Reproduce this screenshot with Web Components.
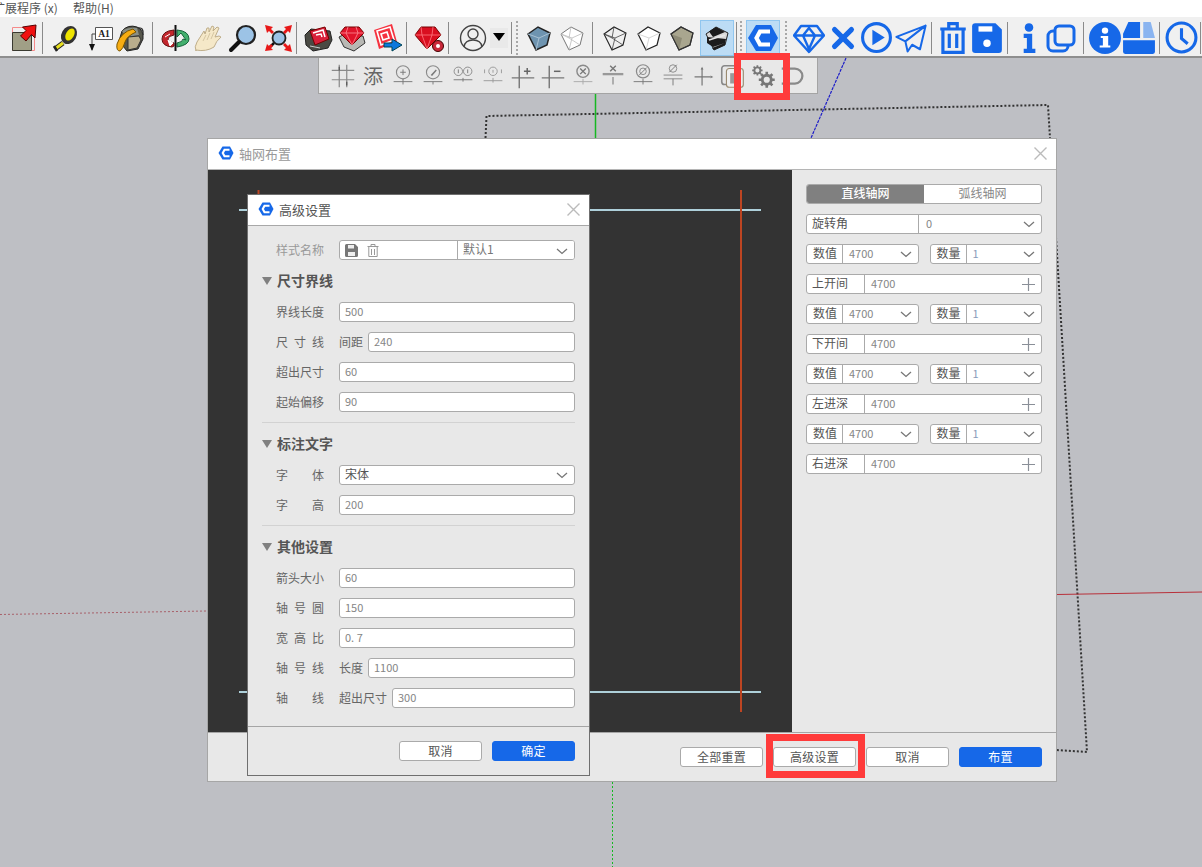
<!DOCTYPE html>
<html lang="zh"><head><meta charset="utf-8"><title>轴网布置</title>
<style>html,body{margin:0;padding:0;background:#bebfc4}</style></head>
<body><su-app></su-app>
<script>
const B='#1668e8';
const LOGO=`<path d="M1 16 9 3h15l7 13-7 13H9z" fill="${B}"/><path d="M23 9.500H13L9.500 16l3.500 6.500h10" fill="none" stroke="#fff" stroke-width="4.200"/>`;
const cubeOuter='M5 12 15 5 27 11 24 23 13 28z';
const cubeIn='M5 12 16 16 27 11M16 16 13 28';
const cubeHid='M15 5 13 16 5 12M13 16 24 23';
const ICONS={
select:`<path d="M5.500 5.500h22v23h-22z" fill="none" stroke="#f58a8a"/><path d="M5.500 10.500h19v18h-19z" fill="#a09f86" stroke="#3a3a30"/><path d="M29 3 28 16 24.500 12.500 19 19 13.500 14 19 8.500 15.500 5z" fill="#f01010" stroke="#500"/>`,
tape:`<path d="M14 21 6 27" stroke="#222" stroke-width="5"/><path d="M14 21 6 27" stroke="#e8e020" stroke-width="3"/><path d="M5 24l3 5" stroke="#222" stroke-width="2.500"/><ellipse cx="20" cy="13" rx="7.500" ry="9.500" transform="rotate(30 20 13)" fill="#333"/><ellipse cx="21" cy="12.500" rx="4" ry="6.500" transform="rotate(30 21 12.500)" fill="#efe400"/>`,
label:`<path d="M11.500 5.500h17v12h-17z" fill="#fff" stroke="#555"/><text x="20" y="15" font-family="Liberation Serif" font-weight="700" font-size="9.500" text-anchor="middle" fill="#222">A1</text><path d="M8 12v16M8 12h3.500" stroke="#444"/><path d="M5 22h6l-3 7z" fill="#111"/>`,
paint:`<path d="M8 9Q14 2 23 5q7 3 6 12l-5 10-11 2L5 19z" fill="#57574c" stroke="#222"/><path d="M8 9Q14 5 23 6l2 7-13 2z" fill="#8a8f86"/><path d="M14 15l11-1 2 4-4 8-9 2z" fill="#b9ad8c" stroke="#333"/><path d="M19 7q-12 3-16 15-1 7 3 7 3-2 5-9 2-6 11-10z" fill="#f8ad12" stroke="#7a5500"/><path d="M24 6q6-1 5 7" fill="none" stroke="#333" stroke-width="1.400"/>`,
orbit:`<path d="M15 8Q3 9 3 17q0 7 10 8l2-1v-3q-6-1-6-4 0-3 6-4z" fill="#c2272d" stroke="#611"/><path d="M9 18l5 3-3 3zM6 15l5-3" fill="#fff" stroke="#fff"/><path d="M18 8q12 1 12 9 0 6-12 8v-4q6-1 6-4l3 1-5-7-4 4z" fill="#43b06e" stroke="#15633a"/><path d="M16.500 3v26" stroke="#111" stroke-width="2"/>`,
hand:`<path d="M4 29Q2 25 5 20L12 9l1 3 2-6 2 0v4l3-6 2 1-1 4 4-4 2 1-4 9 4-1 2 1q-5 4-7 10-8 5-18 3z" fill="#f5e8c8" stroke="#bfae8a"/><path d="M14 13l-3 6M18 11l-3 7M22 10l-3 7" fill="none" stroke="#cdbd98" stroke-width=".8"/>`,
zoom:`<circle cx="19" cy="13" r="9" fill="#9cc3e6" stroke="#222" stroke-width="2.200"/><path d="M12 20 4 28" stroke="#111" stroke-width="4" stroke-linecap="round"/>`,
extents:`<circle cx="17" cy="16" r="6.500" fill="#9cc3e6" stroke="#222" stroke-width="1.800"/><path d="M12 21 7 26" stroke="#111" stroke-width="2.500"/><path d="M3 3l8 2-2 2 3 3-2 2-3-3-2 2zM30 3l-2 8-2-2-3 3-2-2 3-3-2-2zM30 30l-8-2 2-2-3-3 2-2 3 3 2-2z" fill="#e81818"/><path d="M3 29l2-7 2 2 2-2 2 2-2 2 2 2z" fill="#e81818"/>`,
rb1:`<path d="M3 13 9 7l19 2 2 9-4 8-15 3-7-6z" fill="#4a4a44" stroke="#222"/><path d="M8 9 23 5l4 12-14 6z" fill="#d8203a" stroke="#700"/><path d="M11 11l10-3 2 7M14 13l5-1 1 3" fill="none" stroke="#fff" stroke-width="1.500"/><path d="M8 24l10 2" stroke="#ccc"/>`,
rb2:`<path d="M3 15l5 10 10 4 11-8-2-7-20-1z" fill="#b8b8b4" stroke="#333"/><path d="M16 23 4 11l5-6h14l5 6z" fill="#e0142a" stroke="#700"/><path d="M4 11h24M12 5l-2 6 6 12 6-12-2-6" fill="none" stroke="#ff8a94" stroke-width=".8"/>`,
rb3:`<path d="M3 8 21 2l5 18-18 7z" fill="#f5323f"/><path d="M6 9 19 5l4 13-13 5zM10 12l6-2 2 6-6 2z" fill="none" stroke="#fff" stroke-width="1.600"/><path d="M13 21h8v-4l10 6-10 6v-4h-8z" fill="#0d78dc" stroke="#045"/>`,
ruby:`<path d="M14 27 2 13 8 5h14l6 8z" fill="#d90f20" stroke="#700"/><path d="M2 13h26M8 5l1 8 5 14 5-14 1-8" fill="none" stroke="#ff7a82" stroke-width=".8"/><circle cx="25" cy="24" r="5.500" fill="#c9283a" stroke="#400"/><circle cx="25" cy="24" r="2" fill="#fff"/>`,
user:`<circle cx="16" cy="16" r="12.500" fill="none" stroke="#444" stroke-width="1.400"/><circle cx="16" cy="12" r="5" fill="none" stroke="#444" stroke-width="1.400"/><path d="M7 25q1-7 9-7t9 7" fill="none" stroke="#444" stroke-width="1.400"/>`,
drop:`<rect x="7" y="6" width="18" height="20" fill="#e9e9e9"/><path d="M10 11h12l-6 8z" fill="#000"/>`,
slate:`<path d="${cubeOuter}" fill="#6e94b0" stroke="#222" stroke-width="1.500"/><path d="${cubeIn}" fill="none" stroke="#a8c0d2"/>`,
wire1:`<path d="${cubeOuter}" fill="#fff" stroke="#777"/><path d="${cubeIn}M${cubeHid.slice(1)}" fill="none" stroke="#bbb" stroke-width=".8"/>`,
wire2:`<path d="${cubeOuter}" fill="none" stroke="#222" stroke-width="1.100"/><path d="${cubeIn}M${cubeHid.slice(1)}" fill="none" stroke="#444" stroke-width=".8"/>`,
white:`<path d="${cubeOuter}" fill="#fff" stroke="#222" stroke-width="1.200"/><path d="${cubeIn}" fill="none" stroke="#ccc" stroke-width=".8"/>`,
tan:`<path d="${cubeOuter}" fill="#a9a68f" stroke="#333" stroke-width="1.100"/><path d="M5 12 16 16 13 28z" fill="#8e8b76"/><path d="${cubeOuter}" fill="none" stroke="#333" stroke-width="1.100"/>`,
stripe:`<path d="${cubeOuter}" fill="#d8d8d8" stroke="#222"/><path d="M8 9.500 15 5l9 5-12 5zM6 15l19 2-1 4-12 4-6-4zM11 26l13-5v2l-11 5z" fill="#1c1c1c"/><path d="M8 18l16-5" stroke="#e8e8e8" stroke-width="1.500"/>`,
logo:LOGO,
diamond:`<path d="M8 4h16l7 9.500L16 30 1 13.500zM2 13.500h28M10 13.500 16 27l6-13.500L16 6z" fill="none" stroke="${B}" stroke-width="2.400" stroke-linejoin="round"/>`,
cross:`<path d="M7 7 25 25M25 7 7 25" stroke="${B}" stroke-width="5.500" stroke-linecap="round"/>`,
play:`<circle cx="16" cy="16" r="13.500" fill="none" stroke="${B}" stroke-width="3"/><path d="M12 8.500 24 16 12 23.500z" fill="${B}"/>`,
send:`<path d="M29 5 3 15l8 4zM29 5 11 19l2 9 4-6 7 4z" fill="none" stroke="${B}" stroke-width="1.800" stroke-linejoin="round"/>`,
trash:`<path d="M4 7.500h24M12 7V2.500h8V7M6.500 8v21.500h19V8M12.500 12v13.500M19.500 12v13.500" fill="none" stroke="${B}" stroke-width="3"/>`,
save:`<path d="M2 5a3 3 0 0 1 3-3h19l6 6v19a3 3 0 0 1-3 3H5a3 3 0 0 1-3-3z" fill="${B}"/><rect x="8" y="5" width="13" height="5" fill="#fff"/><circle cx="16" cy="21" r="3.500" fill="#fff"/>`,
info2:`<circle cx="16" cy="6" r="4" fill="${B}"/><path d="M11 12h8v14h3v4H11v-4h3v-10h-3z" fill="${B}"/>`,
copy:`<rect x="10" y="4" width="19" height="19" rx="4" fill="none" stroke="${B}" stroke-width="3"/><path d="M10 9H8a5 5 0 0 0-5 5v10a5 5 0 0 0 5 5h10a5 5 0 0 0 5-5v-1" fill="none" stroke="${B}" stroke-width="3"/>`,
info:`<circle cx="16" cy="16" r="15" fill="${B}"/><circle cx="16" cy="9" r="3" fill="#fff"/><path d="M12 14h7v9h2v2H11v-2h3v-7h-2z" fill="#fff"/>`,
panel:`<path d="M1 16V12L6 1h11v15z" fill="${B}"/><path d="M20 1h7l4 15H20z" fill="#8ab4f0"/><path d="M1 18h30v11a2 2 0 0 1-2 2H3a2 2 0 0 1-2-2z" fill="${B}"/>`,
clock:`<circle cx="16" cy="16" r="14" fill="none" stroke="${B}" stroke-width="3"/><path d="M16 7v10l6 5" fill="none" stroke="${B}" stroke-width="3"/>`,
f1:`<path d="M4 10h24M4 20h24M12 4v24M20 4v24" stroke="#8a8a8a" stroke-width="1.300" fill="none"/><path d="M12 6v4M20 22v4" stroke="#555" stroke-width="1.300"/>`,
f3:`<circle cx="16" cy="12" r="7" fill="none" stroke="#8a8a8a" stroke-width="1.200"/><path d="M13 12h6M16 9v6M6 22h20M16 19v6" stroke="#777" stroke-width="1"/>`,
f4:`<circle cx="16" cy="12" r="7" fill="none" stroke="#8a8a8a" stroke-width="1.200"/><path d="M13.500 15l5.500-6 1 1-5 6z" fill="#777"/><path d="M6 22h20M16 22v3" stroke="#777"/>`,
f5:`<circle cx="11" cy="11" r="4.500" fill="none" stroke="#8a8a8a"/><circle cx="21" cy="11" r="4.500" fill="none" stroke="#8a8a8a"/><path d="M11 9v4M21 9v4M6 20h20M16 18v4" stroke="#777"/>`,
f6:`<circle cx="16" cy="11" r="4.500" fill="none" stroke="#999"/><path d="M16 9.500v3M7 9v4M25 9v4M6 21h20M16 18v5" stroke="#999"/>`,
f7:`<path d="M4 18h24M12 5v24" stroke="#777" stroke-width="1.500"/><path d="M17 11h7M20.500 7.500v7" stroke="#666" stroke-width="1.600"/>`,
f8:`<path d="M4 18h24M12 5v24" stroke="#777" stroke-width="1.500"/><path d="M17 11h7" stroke="#666" stroke-width="1.600"/>`,
f9:`<circle cx="16" cy="11" r="6.500" fill="none" stroke="#8a8a8a" stroke-width="1.500"/><path d="M13 8l6 6M19 8l-6 6" stroke="#777" stroke-width="1.500"/><path d="M6 22h20M16 19v6" stroke="#aaa"/>`,
f10:`<path d="M13 5l6 6M19 5l-6 6" stroke="#777" stroke-width="1.500"/><path d="M5 14h22" stroke="#999" stroke-width="2.500"/><path d="M16 17v8" stroke="#aaa" stroke-width="2"/>`,
f11:`<circle cx="16" cy="11" r="7" fill="none" stroke="#8a8a8a" stroke-width="1.300"/><circle cx="16" cy="11" r="3.500" fill="none" stroke="#8a8a8a"/><path d="M12 15l8-8" stroke="#777"/><path d="M6 22h20M16 19v6" stroke="#777"/>`,
f12:`<circle cx="16" cy="8" r="4" fill="none" stroke="#8a8a8a"/><path d="M12 12l8-8" stroke="#777"/><path d="M6 15h20M6 19h20" stroke="#888"/><path d="M16 19v7" stroke="#777"/>`,
f13:`<path d="M7 17h17M15 8v18" stroke="#777" stroke-width="1.300"/><path d="M13.500 9 15 6l1.500 3zM24 15.500l3 1.500-3 1.500z" fill="#777"/>`,
f14:`<rect x="4" y="5" width="18" height="20" rx="3" fill="none" stroke="#888" stroke-width="1.700"/><rect x="9" y="8" width="18" height="20" rx="3" fill="#eee" stroke="#9a8a70" stroke-width="1.200"/><rect x="13" y="13" width="6" height="11" fill="#999"/>`,
gears:`<g fill="none" stroke="#777"><circle cx="10" cy="10" r="3.200" stroke-width="2"/><path d="M10 4.500v2M10 13.500v2M4.500 10h2M13.500 10h2M6 6l1.500 1.500M12.500 12.500 14 14M14 6l-1.500 1.500M6 14l1.500-1.500" stroke-width="1.800"/><circle cx="20" cy="20" r="4.800" stroke-width="3"/><path d="M20 11.500v3M20 25.500v3M11.500 20h3M25.500 20h3M14 14l2 2M24 24l2 2M26 14l-2 2M14 26l2-2" stroke-width="2.800"/></g>`,
f16:`<path d="M4 8h14a8 8 0 0 1 0 16H4" fill="none" stroke="#8a8a8a" stroke-width="2.400"/>`
};
const svg=(n,s=32)=>`<svg width="${s}" height="${s}" viewBox="0 0 32 32" aria-hidden="true">${ICONS[n]}</svg>`;

function el(name,html){
  customElements.define(name,class extends HTMLElement{
    constructor(){super();this.attachShadow({mode:'open'}).innerHTML=typeof html==='function'?html(this):html;}
  });
}
const FONT=`font-family:"Noto Sans CJK SC","Liberation Sans",sans-serif;`;

customElements.define('ui-btn',class extends HTMLElement{
  constructor(){super();this.attachShadow({mode:'open'}).innerHTML=`<style>
  :host{display:flex;align-items:center;justify-content:center;box-sizing:border-box;width:83px;height:20px;padding-bottom:2px;border:1px solid #aaa;border-radius:3px;background:#fff;color:#555;font-size:12px;letter-spacing:.2px;${FONT}}
  :host([primary]){background:${B};border-color:${B};color:#fff}
  </style><slot></slot>`;}
});

customElements.define('ui-field',class extends HTMLElement{
  constructor(){super();this.attachShadow({mode:'open'});}
  connectedCallback(){
    const g=a=>this.getAttribute(a);
    const lw=g('lw'), k=g('kind');
    const end=k==='chev'?`<svg class="end" width="12" height="7" viewBox="0 0 12 7"><path d="M1 1l5 4.500L11 1" fill="none" stroke="#777" stroke-width="1.300"/></svg>`
      :k==='plus'?`<svg class="end" width="13" height="13" viewBox="0 0 13 13"><path d="M6.500 0v13M0 6.500h13" stroke="#8a8f98" stroke-width="1.200"/></svg>`:'';
    this.shadowRoot.innerHTML=`<style>
    :host{display:flex;box-sizing:border-box;height:20px;border:1px solid #aaa;border-radius:3px;background:#fff;overflow:hidden;font-size:12px;line-height:16px;color:#555;flex:1 1 0;min-width:0;${FONT}}
    .l{box-sizing:border-box;width:${lw||0}px;flex:none;border-right:1px solid #aaa;padding-left:${g('lp')||5}px;white-space:nowrap}
    .v{flex:1;padding-left:${g('vp')||5}px;color:${g('vc')||'#858585'};font-size:${g('vs')||11}px;white-space:nowrap}
    .end{align-self:center;margin-right:6px;flex:none}
    </style>${lw?`<div class="l">${g('label')||''}</div>`:''}<div class="v">${g('value')||''}</div>${end}`;
  }
});

customElements.define('form-row',class extends HTMLElement{
  constructor(){super();this.attachShadow({mode:'open'});}
  connectedCallback(){
    const g=a=>this.getAttribute(a);
    this.shadowRoot.innerHTML=`<style>
    :host{display:flex;align-items:center;height:20px;font-size:12px;color:#666;margin-top:10px;padding-left:14px;${FONT}}
    :host([first]){margin-top:0}
    .lab{width:48px;flex:none;text-align:justify;text-align-last:justify;margin:-2px 15px 0 0;white-space:nowrap}
    :host([dim]) .lab{color:#999}
    .sub{margin:-2px 5px 0 0;white-space:nowrap}
    </style><div class="lab">${g('label')}</div>${g('sub')?`<span class="sub">${g('sub')}</span>`:''}<slot></slot>`;
  }
});

customElements.define('sec-head',class extends HTMLElement{
  constructor(){super();this.attachShadow({mode:'open'}).innerHTML=`<style>
  :host{display:flex;align-items:center;height:42px;padding-bottom:2px;box-sizing:border-box;font-size:14px;font-weight:700;color:#555;${FONT}}
  svg{margin:2px 5px 0 0;flex:none}
  </style><svg width="10" height="8" viewBox="0 0 10 8"><path d="M0 0h10L5 8z" fill="#808080"/></svg><slot></slot>`;}
});

customElements.define('win-head',class extends HTMLElement{
  constructor(){super();this.attachShadow({mode:'open'}).innerHTML=`<style>
  :host{display:flex;align-items:center;box-sizing:border-box;height:31px;padding:0 9px 2px 10px;background:#fff;border-bottom:1px solid #b5b5b5;font-size:13px;color:var(--title,#555);${FONT}}
  svg{margin-right:5px;flex:none}
  .t{flex:1}
  </style><svg width="16" height="16" viewBox="0 0 32 32">${LOGO}</svg><span class="t"><slot></slot></span>
  <svg style="margin:0" width="13" height="13" viewBox="0 0 13 13"><path d="M.5.500l12 12M12.500.500l-12 12" stroke="#bbb" stroke-width="1.400"/></svg>`;}
});

el('app-menu',`<style>:host{display:flex;height:17px;background:#fff;font-size:12px;line-height:16px;color:#555;overflow:hidden;${FONT}}
 span{white-space:nowrap}.a{margin-left:-7px;width:80px}</style><span class="a">扩展程序 (x)</span><span>帮助(H)</span>`);

const SIZES={diamond:32,user:32,logo:32,send:36,trash:34,save:34,info2:34,info:34,panel:34,clock:33,play:33,cross:30,copy:32};
const ITEMS=[['select',23],0,42.5,['tape',65],['label',100],['paint',130],0,152,['orbit',175],['hand',208],['zoom',243],['extents',278],0,296,['rb1',318],['rb2',352],['rb3',387],0,406,['ruby',429],0,448,['user',473],['drop',499],0,511,1,517,['slate',539],['wire1',572],0,592,['wire2',615],['white',649],['tan',682],['stripe',717,1],0,736,1,741,['logo',763,1],1,786,['diamond',809],['cross',843],['play',876],['send',911],0,931,['trash',953],['save',987],0,1007,['info2',1029],['copy',1061],0,1083,['info',1105],['panel',1139],0,1159,['clock',1181],0,1200];
function buildBar(){
  let out='',right=0;
  for(let i=0;i<ITEMS.length;i++){
    const it=ITEMS[i];
    if(Array.isArray(it)){
      const w=it[2]?34:32,l=it[1]-w/2;
      out+=`<div class="${it[2]?'hl':'ic'}" style="margin-left:${l-right}px">${svg(it[0],SIZES[it[0]]||32)}</div>`;right=l+w;
    }else if(it===0){
      const c=ITEMS[++i],l=c-.5;out+=`<i class="sep" style="margin-left:${l-right}px"></i>`;right=l+1;
    }else{
      const c=ITEMS[++i],l=c-1;out+=`<i class="grip" style="margin-left:${l-right}px"></i>`;right=l+2;
    }
  }
  return out;
}
el('app-toolbar',()=>`<style>:host{display:flex;align-items:center;box-sizing:border-box;height:41px;padding-top:2px;background:#f0f0f0;border-bottom:2px solid #8e8e8e;overflow:hidden}
 .ic,.hl{flex:none;display:flex;align-items:center;justify-content:center}.ic{width:32px;height:32px}
 .hl{box-sizing:border-box;width:34px;height:36px;background:#bcdcf5;border:1px solid #90c6ef}
 .sep{flex:none;width:1px;height:32px;background:#8a8a8a}
 .grip{flex:none;width:2px;height:34px;background:repeating-linear-gradient(#a8a8a8 0 2px,transparent 2px 4px)}
 svg{display:block;flex:none}</style>${buildBar()}`);

const FL=['f1','ch','f3','f4','f5','f6','f7','f8','f9','f10','f11','f12','f13','f14','gears','f16'];
el('float-toolbar',`<style>:host{position:absolute;left:318px;top:58px;display:flex;align-items:center;box-sizing:border-box;width:500px;height:36px;padding-left:9px;background:#e8e8e8;border:1px solid #a4a4a4;border-top:0;z-index:1}
 .c{flex:none;width:30px;height:30px;display:flex;align-items:center;justify-content:center}
 .t{font:20px/30px "Noto Sans CJK SC",sans-serif;color:#666}
 svg{display:block}</style>${FL.map(n=>`<div class="c">${n==='ch'?'<span class="t">添</span>':svg(n,30)}</div>`).join('')}`);

el('advanced-dialog',`<style>
 :host{position:absolute;left:39px;top:55px;display:flex;flex-direction:column;box-sizing:border-box;width:343px;height:582px;background:#e8e8e8;border:1px solid #6f6f6f;z-index:2;${FONT}}
 win-head{--title:#555;border-bottom-color:#a8a8a8}
 .body{flex:1;padding:14px 14px 0}
 .hr{height:1px;background:#d2d2d2;margin-top:10px}
 .sel{display:flex;flex:1;box-sizing:border-box;height:20px;border:1px solid #aaa;border-radius:3px;background:#fff;overflow:hidden}
 .tools{box-sizing:border-box;width:118px;border-right:1px solid #aaa;display:flex;align-items:center;gap:9px;padding-left:5px;flex:none}
 .foot{display:flex;justify-content:flex-end;gap:10px;box-sizing:border-box;height:49px;padding:14px 14px 0;border-top:1px solid #a5a5a5}
 </style>
 <win-head>高级设置</win-head>
 <div class="body">
  <form-row first dim label="样式名称"><div class="sel"><div class="tools">
   <svg width="13" height="13" viewBox="0 0 13 13"><path d="M0 1.500A1.500 1.500 0 0 1 1.500 0H10l3 3v8.500a1.500 1.500 0 0 1-1.500 1.500h-10A1.500 1.500 0 0 1 0 11.500z" fill="#777"/><rect x="3" y="1" width="6" height="3.500" fill="#eee"/><rect x="3" y="8" width="7" height="4" fill="#eee"/></svg>
   <svg width="12" height="13" viewBox="0 0 12 13"><path d="M.5 2.500h11M4 2V.500h4V2M1.800 3v9.500h8.400V3M4.500 5v6M7.500 5v6" fill="none" stroke="#999"/></svg>
  </div><ui-field value="默认1" kind="chev" vp="5" vs="12" vc="#777" style="border:0;border-radius:0"></ui-field></div></form-row>
  <sec-head>尺寸界线</sec-head>
  <form-row first label="界线长度"><ui-field value="500"></ui-field></form-row>
  <form-row label="尺寸线" sub="间距"><ui-field value="240"></ui-field></form-row>
  <form-row label="超出尺寸"><ui-field value="60"></ui-field></form-row>
  <form-row label="起始偏移"><ui-field value="90"></ui-field></form-row>
  <div class="hr"></div>
  <sec-head>标注文字</sec-head>
  <form-row first label="字体"><ui-field value="宋体" kind="chev" vs="12" vc="#555"></ui-field></form-row>
  <form-row label="字高"><ui-field value="200"></ui-field></form-row>
  <div class="hr"></div>
  <sec-head>其他设置</sec-head>
  <form-row first label="箭头大小"><ui-field value="60"></ui-field></form-row>
  <form-row label="轴号圆"><ui-field value="150"></ui-field></form-row>
  <form-row label="宽高比"><ui-field value="0. 7"></ui-field></form-row>
  <form-row label="轴号线" sub="长度"><ui-field value="1100"></ui-field></form-row>
  <form-row label="轴线" sub="超出尺寸"><ui-field value="300"></ui-field></form-row>
 </div>
 <div class="foot"><ui-btn>取消</ui-btn><ui-btn primary>确定</ui-btn></div>`);

const pair=()=>`<div class="two"><ui-field label="数值" lw="36" lp="6" vp="6" value="4700" kind="chev"></ui-field><ui-field label="数量" lw="36" lp="6" vp="6" value="1" vc="#8a9cba" kind="chev"></ui-field></div>`;
const span=(l)=>`<ui-field label="${l}" lw="58" lp="5" vp="6" value="4700" kind="plus"></ui-field>`;
el('grid-dialog',`<style>
 :host{position:absolute;left:207px;top:138px;display:flex;flex-direction:column;box-sizing:border-box;width:850px;height:644px;background:#e8e8e8;border:1px solid #a6a6a6;${FONT}}
 win-head{--title:#999}
 .main{flex:1;display:flex;min-height:0}
 .pv{width:584px;flex:none;background:#333;position:relative}
 .pv>svg{position:absolute;inset:0;display:block}
 .side{flex:1;padding:14px 14px 0;display:flex;flex-direction:column;gap:10px}
 .side>ui-field{flex:none}
 .seg{display:flex;box-sizing:border-box;height:20px;border:1px solid #aaa;border-radius:3px;background:#fff;overflow:hidden;font-size:12px;line-height:16px;text-align:center;color:#888}
 .seg b{font-weight:500;width:117px;background:#808080;color:#fff}.seg span{flex:1}
 .two{display:flex;gap:11px}
 .foot{display:flex;justify-content:flex-end;gap:10px;box-sizing:border-box;height:49px;padding:14px 14px 0;border-top:1px solid #a5a5a5}
 </style>
 <win-head>轴网布置</win-head>
 <div class="main"><div class="pv"><svg width="584" height="562" viewBox="0 0 584 562">
   <path d="M31 40h522M31 522h522" stroke="#aed0da" stroke-width="2"/><path d="M50.500 20v40M533 20v522" stroke="#bd4522" stroke-width="2"/>
 </svg></div>
 <div class="side">
  <div class="seg"><b>直线轴网</b><span>弧线轴网</span></div>
  <ui-field label="旋转角" lw="112" lp="5" vp="7" value="0" kind="chev"></ui-field>
  ${pair()}${span('上开间')}${pair()}${span('下开间')}${pair()}${span('左进深')}${pair()}${span('右进深')}
 </div></div>
 <div class="foot"><ui-btn>全部重置</ui-btn><ui-btn>高级设置</ui-btn><ui-btn>取消</ui-btn><ui-btn primary>布置</ui-btn></div>
 <advanced-dialog></advanced-dialog>`);

el('scene-lines',`<style>:host{position:absolute;inset:0;display:block}svg{display:block}</style>
 <svg width="1202" height="867" viewBox="0 0 1202 867">
  <path d="M485.500 138 486.500 116 1048 105 1087 752 1056 750" fill="none" stroke="#333" stroke-width="2" stroke-dasharray="2 2"/>
  <path d="M846 58 811 138" stroke="#1c1cc8" stroke-width="1.200" stroke-dasharray="3 1"/>
  <path d="M595.500 94v44" stroke="#16b822" stroke-width="1.500"/>
  <path d="M612.500 782v85" stroke="#16b822" stroke-dasharray="2 2"/>
  <path d="M0 614.500 207 611" stroke="#a8606a" stroke-dasharray="2 2"/>
  <path d="M1057 594.500 1202 592" stroke="#b8303a"/>
 </svg>`);

el('red-box',`<style>:host{position:absolute;box-sizing:border-box;border:7px solid #ff3b3b;z-index:5;pointer-events:none}</style>`);

el('su-app',`<style>:host{display:block;position:relative;width:1202px;height:867px;overflow:hidden;background:#bebfc4}</style>
 <app-menu></app-menu><app-toolbar></app-toolbar>
 <scene-lines></scene-lines><float-toolbar></float-toolbar><grid-dialog></grid-dialog>
 <red-box style="left:734px;top:53px;width:56px;height:47px"></red-box>
 <red-box style="left:766px;top:734px;width:99px;height:44px"></red-box>`);
</script></body></html>
